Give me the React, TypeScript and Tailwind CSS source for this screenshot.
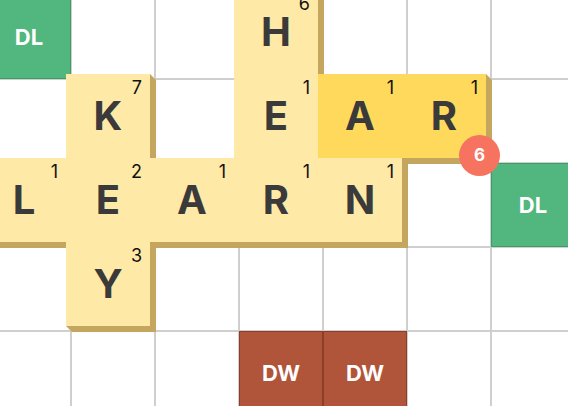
type Tile = { letter: string; points: number; fresh?: boolean; badge?: number };
type Cell = { bonus?: "DL" | "DW"; tile?: Tile };

// visible part of the board: 5 rows x 7 columns
const rows: Cell[][] = [
  [{ bonus: "DL" }, {}, {}, { tile: { letter: "H", points: 6 } }, {}, {}, {}],
  [
    {},
    { tile: { letter: "K", points: 7 } },
    {},
    { tile: { letter: "E", points: 1 } },
    { tile: { letter: "A", points: 1, fresh: true } },
    { tile: { letter: "R", points: 1, fresh: true, badge: 6 } },
    {},
  ],
  [
    { tile: { letter: "L", points: 1 } },
    { tile: { letter: "E", points: 2 } },
    { tile: { letter: "A", points: 1 } },
    { tile: { letter: "R", points: 1 } },
    { tile: { letter: "N", points: 1 } },
    {},
    { bonus: "DL" },
  ],
  [{}, { tile: { letter: "Y", points: 3 } }, {}, {}, {}, {}, {}],
  [{}, {}, {}, { bonus: "DW" }, { bonus: "DW" }, {}, {}],
];

function TileView({ tile }: { tile: Tile }) {
  return (
    <div className="absolute -left-[6px] -top-[6px] z-10 h-[84px] w-[84px]">
      <div className="absolute left-0 top-0 h-[90px] w-[90px] bg-[#c4a65e] [clip-path:polygon(0_0,84px_0,90px_6px,90px_90px,6px_90px,0_84px)]" />
      <div
        className={
          "absolute inset-0 flex items-center justify-center " +
          (tile.fresh ? "bg-[#ffd95b]" : "bg-[#ffe9a6]")
        }
      >
        <span className="text-[40px] font-bold leading-none text-[#3a3a3a]">
          {tile.letter}
        </span>
        <span className="absolute right-[8px] top-[5px] text-[18px] leading-none text-[#111]">
          {tile.points}
        </span>
      </div>
      {tile.badge !== undefined && (
        <div className="absolute left-[57px] top-[61px] flex h-[41px] w-[41px] items-center justify-center rounded-full bg-[#f6735f] text-[17px] font-bold text-white">
          {tile.badge}
        </div>
      )}
    </div>
  );
}

export default function App() {
  return (
    <div className="relative h-[406px] w-[568px] overflow-hidden bg-white font-['Inter',sans-serif]">
      <div className="-ml-[13px] -mt-[5px] grid grid-cols-[repeat(7,84px)] grid-rows-[repeat(5,84px)]">
        {rows.map((row, r) =>
          row.map((cell, c) => {
            let look = "border-[#cfcfcf] bg-white";
            if (cell.bonus === "DL") look = "border-[#3f9c67] bg-[#52b77e]";
            if (cell.bonus === "DW") look = "border-[#8c3e28] bg-[#b0553a]";
            return (
              <div
                key={r + "-" + c}
                className={"relative flex items-center justify-center border " + look}
              >
                {cell.bonus && (
                  <span className="text-[22px] font-bold text-white">{cell.bonus}</span>
                )}
                {cell.tile && <TileView tile={cell.tile} />}
              </div>
            );
          })
        )}
      </div>
    </div>
  );
}
